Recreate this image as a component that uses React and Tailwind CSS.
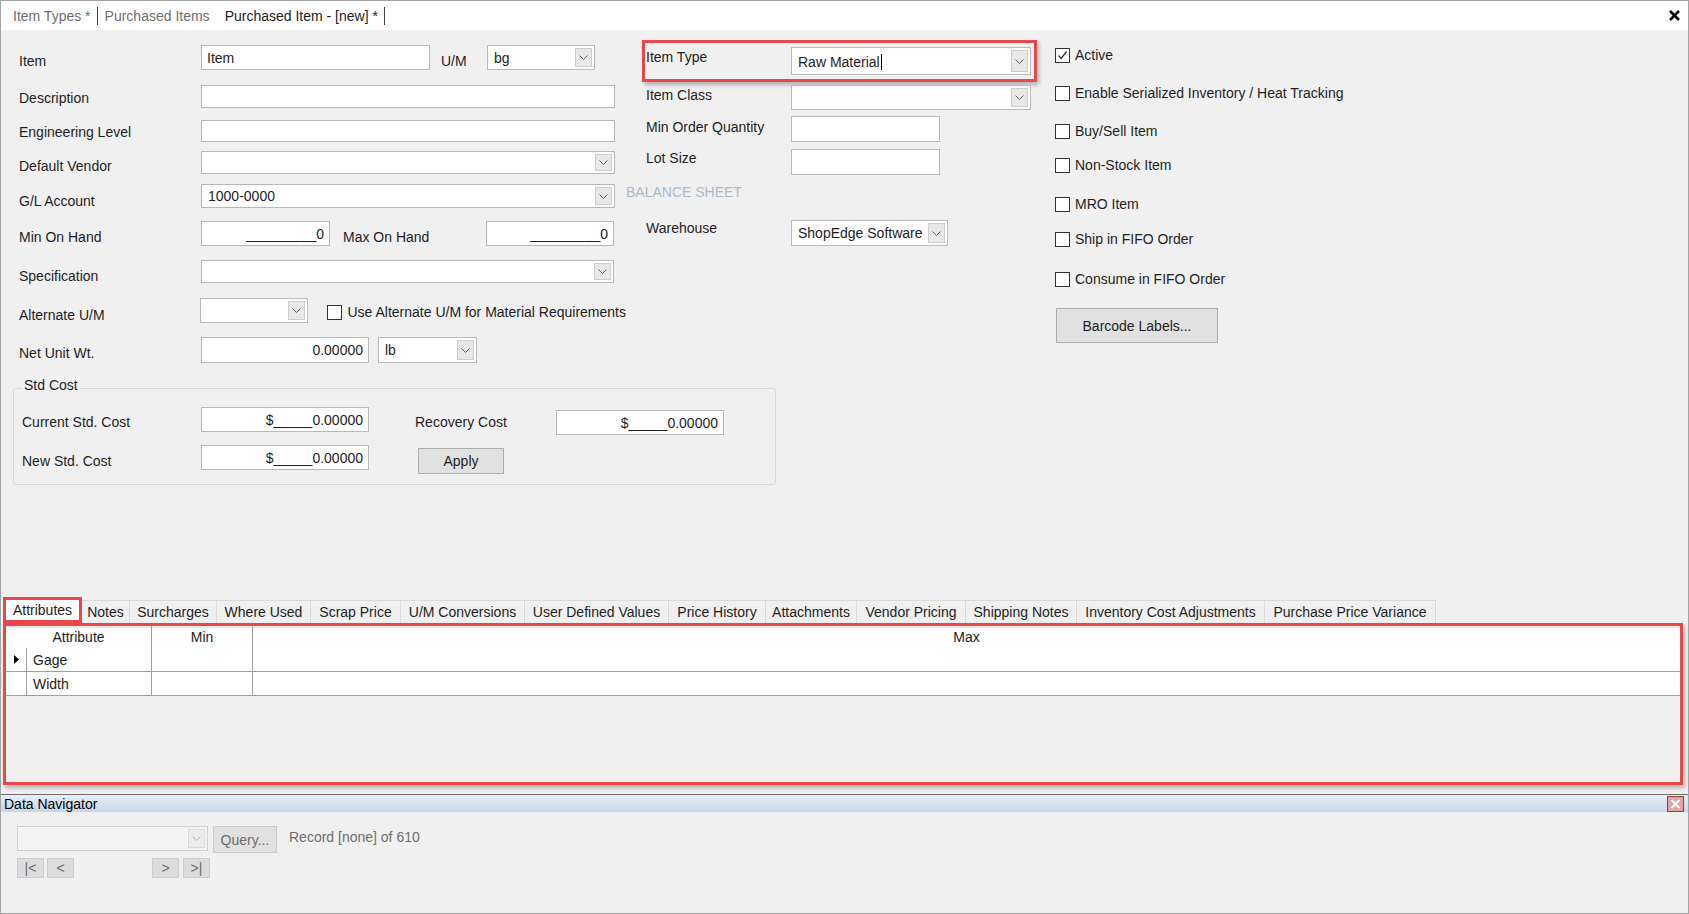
import React from "react";

const Chevron = ({ color = "#5f5f5f" }) => (
  <svg width="9" height="5" viewBox="0 0 9 5">
    <path d="M0.5 0.5L4.5 4.5L8.5 0.5" fill="none" stroke={color} strokeWidth="1" />
  </svg>
);

function Combo({ className = "", text = "", disabled = false }) {
  return (
    <div className={`flex items-stretch border ${disabled ? "bg-[#f4f4f4] border-[#cfcfcf]" : "bg-white border-[#b9b9b9]"} ${className}`}>
      <div className="flex-1 flex items-center pl-[6px] overflow-hidden whitespace-nowrap">{text}</div>
      <div className={`w-[17px] my-[2px] mr-[2px] border flex items-center justify-center ${disabled ? "bg-[#ececec] border-[#dadada]" : "bg-[#e8e8e8] border-[#cdcdcd]"}`}>
        <Chevron color={disabled ? "#b0b0b0" : "#5f5f5f"} />
      </div>
    </div>
  );
}

function TextBox({ className = "", text = "", right = false }) {
  return (
    <div className={`flex items-center bg-white border border-[#b9b9b9] px-[5px] whitespace-nowrap ${right ? "justify-end" : ""} ${className}`}>
      {text}
    </div>
  );
}

function Check({ checked = false, label, className = "" }) {
  return (
    <div className={`flex items-center h-[20px] ${className}`}>
      <div className="w-[15px] h-[15px] border border-[#333] bg-white flex items-center justify-center">
        {checked && (
          <svg width="11" height="11" viewBox="0 0 11 11">
            <path d="M1.5 5.5L4.2 8.5L9.5 1.5" stroke="#333" strokeWidth="1.3" fill="none" />
          </svg>
        )}
      </div>
      <span className="ml-[5px] whitespace-nowrap">{label}</span>
    </div>
  );
}

const tabs = [
  { t: "Notes", w: "w-[48px]" },
  { t: "Surcharges", w: "w-[87px]" },
  { t: "Where Used", w: "w-[94px]" },
  { t: "Scrap Price", w: "w-[90px]" },
  { t: "U/M Conversions", w: "w-[124px]" },
  { t: "User Defined Values", w: "w-[144px]" },
  { t: "Price History", w: "w-[97px]" },
  { t: "Attachments", w: "w-[91px]" },
  { t: "Vendor Pricing", w: "w-[109px]" },
  { t: "Shipping Notes", w: "w-[111px]" },
  { t: "Inventory Cost Adjustments", w: "w-[188px]" },
  { t: "Purchase Price Variance", w: "w-[171px]" },
];

export default function App() {
  return (
    <div className="w-[1689px] h-[914px] bg-[#f0f0f0] border border-[#a3a3a3] flex flex-col overflow-hidden font-['Liberation_Sans',Arial,sans-serif] text-[14px] leading-[16px] text-[#1e1e1e]">
      {/* Top document tabs */}
      <div className="h-[29px] shrink-0 bg-white flex items-center pl-[12px]">
        <span className="text-[#6f6f6f]">Item Types *</span>
        <div className="w-px h-[18px] bg-[#444] ml-[6px] mr-[7px]" />
        <span className="text-[#6f6f6f]">Purchased Items</span>
        <span className="ml-[15px]">Purchased Item - [new] *</span>
        <div className="w-px h-[18px] bg-[#444] ml-[6px]" />
        <div className="ml-auto mr-[8px] flex items-center">
          <svg width="11" height="11" viewBox="0 0 11 11">
            <path d="M1 1L10 10M10 1L1 10" stroke="#000" strokeWidth="2.6" />
          </svg>
        </div>
      </div>

      {/* Form area */}
      <div className="h-[567px] shrink-0 flex flex-col">
        <div className="flex">
          {/* Left column */}
          <div className="w-[625px] shrink-0 pl-[18px] pt-[15px] flex flex-col">
            <div className="h-[40px] flex items-start">
              <div className="w-[182px] mt-[8px]">Item</div>
              <TextBox className="w-[229px] h-[25px]" text="Item" />
              <div className="w-[46px] ml-[11px] mt-[8px]">U/M</div>
              <Combo className="w-[108px] h-[25px]" text="bg" />
            </div>
            <div className="h-[35px] flex items-start">
              <div className="w-[182px] mt-[5px]">Description</div>
              <TextBox className="w-[414px] h-[23px]" />
            </div>
            <div className="h-[31px] flex items-start">
              <div className="w-[182px] mt-[4px]">Engineering Level</div>
              <TextBox className="w-[414px] h-[22px]" />
            </div>
            <div className="h-[33px] flex items-start">
              <div className="w-[182px] mt-[7px]">Default Vendor</div>
              <Combo className="w-[414px] h-[23px]" />
            </div>
            <div className="h-[37px] flex items-start">
              <div className="w-[182px] mt-[9px]">G/L Account</div>
              <Combo className="w-[414px] h-[24px]" text="1000-0000" />
            </div>
            <div className="h-[39px] flex items-start">
              <div className="w-[182px] mt-[8px]">Min On Hand</div>
              <TextBox className="w-[129px] h-[25px]" text="_________0" right />
              <div className="w-[143px] ml-[13px] mt-[8px]">Max On Hand</div>
              <TextBox className="w-[128px] h-[25px]" text="_________0" right />
            </div>
            <div className="h-[38px] flex items-start">
              <div className="w-[182px] mt-[8px]">Specification</div>
              <Combo className="w-[413px] h-[23px]" />
            </div>
            <div className="h-[39px] flex items-start">
              <div className="w-[182px] mt-[9px]">Alternate U/M</div>
              <Combo className="w-[109px] h-[25px]" />
              <Check className="ml-[19px] mt-[4px]" label="Use Alternate U/M for Material Requirements" />
            </div>
            <div className="h-[26px] flex items-start">
              <div className="w-[182px] mt-[8px]">Net Unit Wt.</div>
              <TextBox className="w-[168px] h-[26px]" text="0.00000" right />
              <Combo className="w-[99px] h-[26px] ml-[9px]" text="lb" />
            </div>
          </div>

          {/* Middle column */}
          <div className="w-[429px] shrink-0 pt-[10px] flex flex-col">
            <div className="ml-[16px] w-[395px] h-[42px] border-[3px] border-[#e8474b] flex items-start pl-[1px] shadow-[2px_3px_4px_rgba(0,0,0,0.25)]">
              <div className="w-[145px] mt-[6px]">Item Type</div>
              <Combo
                className="w-[240px] h-[28px] mt-[4px]"
                text={
                  <span className="flex items-center mt-[2px]">
                    Raw Material<span className="inline-block w-px h-[16px] bg-black ml-[1px]" />
                  </span>
                }
              />
            </div>
            <div className="mt-[3px] pl-[20px] flex items-start">
              <div className="w-[145px] mt-[2px]">Item Class</div>
              <Combo className="w-[240px] h-[25px]" />
            </div>
            <div className="mt-[6px] pl-[20px] flex items-start">
              <div className="w-[145px] mt-[3px]">Min Order Quantity</div>
              <TextBox className="w-[149px] h-[26px]" />
            </div>
            <div className="mt-[7px] pl-[20px] flex items-start">
              <div className="w-[145px] mt-[1px]">Lot Size</div>
              <TextBox className="w-[149px] h-[26px]" />
            </div>
            <div className="mt-[9px] text-[#a9b9cc]">BALANCE SHEET</div>
            <div className="mt-[20px] pl-[20px] flex items-start">
              <div className="w-[145px]">Warehouse</div>
              <Combo className="w-[157px] h-[26px]" text="ShopEdge Software" />
            </div>
          </div>

          {/* Right column */}
          <div className="flex-1 pt-[15px] flex flex-col">
            <Check checked label="Active" />
            <Check className="mt-[18px]" label="Enable Serialized Inventory / Heat Tracking" />
            <Check className="mt-[18px]" label="Buy/Sell Item" />
            <Check className="mt-[14px]" label="Non-Stock Item" />
            <Check className="mt-[19px]" label="MRO Item" />
            <Check className="mt-[15px]" label="Ship in FIFO Order" />
            <Check className="mt-[20px]" label="Consume in FIFO Order" />
            <div className="mt-[19px] ml-[1px] w-[162px] h-[35px] bg-[#e1e1e1] border border-[#adadad] flex items-center justify-center">
              Barcode Labels...
            </div>
          </div>
        </div>

        {/* Std Cost group */}
        <div className="relative mt-[25px] ml-[12px] w-[763px] h-[97px] border border-[#d3dce3] rounded-[3px] pt-[18px]">
          <div className="absolute left-[8px] -top-[12px] px-[2px] bg-[#f0f0f0]">Std Cost</div>
          <div className="flex items-start">
            <div className="w-[187px] pl-[8px] mt-[7px]">Current Std. Cost</div>
            <TextBox className="w-[168px] h-[25px]" text="$_____0.00000" right />
            <div className="w-[141px] ml-[46px] mt-[7px]">Recovery Cost</div>
            <TextBox className="w-[168px] h-[25px] mt-[3px]" text="$_____0.00000" right />
          </div>
          <div className="flex items-start mt-[10px]">
            <div className="w-[187px] pl-[8px] mt-[8px]">New Std. Cost</div>
            <TextBox className="w-[168px] h-[25px]" text="$_____0.00000" right />
            <div className="ml-[49px] mt-[3px] w-[86px] h-[26px] bg-[#e1e1e1] border border-[#adadad] flex items-center justify-center">
              Apply
            </div>
          </div>
        </div>
      </div>

      {/* Bottom tabs */}
      <div className="h-[26px] shrink-0 flex items-end">
        <div className="ml-[2px] w-[79px] h-[26px] border-[3px] border-[#e8474b] bg-white flex items-center justify-center relative z-10">
          Attributes
        </div>
        {tabs.map((tb) => (
          <div
            key={tb.t}
            className={`${tb.w} h-[23px] border-t border-r border-[#d9d9d9] bg-[#f0f0f0] flex items-center justify-center whitespace-nowrap`}
          >
            {tb.t}
          </div>
        ))}
      </div>

      {/* Grid */}
      <div className="ml-[2px] w-[1680px] h-[162px] shrink-0 border-[3px] border-[#e8474b] bg-[#f0f0f0] shadow-[2px_3px_4px_rgba(0,0,0,0.25)] flex flex-col">
        <div className="h-[22px] bg-white flex shadow-[inset_0_3px_3px_-1px_rgba(0,0,0,0.12)]">
          <div className="w-[146px] border-r border-[#a0a0a0] flex items-center justify-center">Attribute</div>
          <div className="w-[101px] border-r border-[#a0a0a0] flex items-center justify-center">Min</div>
          <div className="flex-1 flex items-center justify-center">Max</div>
        </div>
        <div className="h-[24px] bg-white flex border-b border-[#a0a0a0]">
          <div className="w-[21px] border-r border-[#a0a0a0] flex items-center justify-center">
            <svg width="5" height="9" viewBox="0 0 5 9">
              <path d="M0 0L5 4.5L0 9Z" fill="#000" />
            </svg>
          </div>
          <div className="w-[125px] border-r border-[#a0a0a0] flex items-center pl-[6px]">Gage</div>
          <div className="w-[101px] border-r border-[#a0a0a0]" />
          <div className="flex-1" />
        </div>
        <div className="h-[24px] bg-white flex border-b border-[#a0a0a0]">
          <div className="w-[21px] border-r border-[#a0a0a0]" />
          <div className="w-[125px] border-r border-[#a0a0a0] flex items-center pl-[6px]">Width</div>
          <div className="w-[101px] border-r border-[#a0a0a0]" />
          <div className="flex-1" />
        </div>
      </div>

      {/* Data Navigator */}
      <div className="mt-[9px] h-[18px] shrink-0 border-t border-[#6e6e6e] bg-linear-to-b from-[#e6eef8] to-[#c6d6ea] flex items-center">
        <span className="pl-[3px] text-black">Data Navigator</span>
        <div className="ml-auto mr-[4px] w-[17px] h-[16px] bg-[#e4a3a3] border border-[#7c4646] flex items-center justify-center">
          <svg width="11" height="10" viewBox="0 0 11 10">
            <path d="M1.5 1L9.5 9M9.5 1L1.5 9" stroke="#fff" strokeWidth="2.2" />
          </svg>
        </div>
      </div>
      <div className="flex-1 flex flex-col pl-[16px] pt-[14px]">
        <div className="flex items-start">
          <Combo className="w-[191px] h-[25px]" disabled />
          <div className="ml-[5px] w-[64px] h-[27px] bg-[#e1e1e1] border border-[#cbcbcb] text-[#6d6d6d] flex items-center justify-center">
            Query...
          </div>
          <div className="ml-[12px] mt-[3px] text-[#6d6d6d]">Record [none] of 610</div>
        </div>
        <div className="flex items-start mt-[5px] text-[#6a6a6a]">
          <div className="w-[27px] h-[20px] bg-[#dcdcdc] border border-[#cdcdcd] flex items-center justify-center">|&lt;</div>
          <div className="ml-[3px] w-[27px] h-[20px] bg-[#dcdcdc] border border-[#cdcdcd] flex items-center justify-center">&lt;</div>
          <div className="ml-[78px] w-[27px] h-[20px] bg-[#dcdcdc] border border-[#cdcdcd] flex items-center justify-center">&gt;</div>
          <div className="ml-[4px] w-[27px] h-[20px] bg-[#dcdcdc] border border-[#cdcdcd] flex items-center justify-center">&gt;|</div>
        </div>
      </div>
    </div>
  );
}
